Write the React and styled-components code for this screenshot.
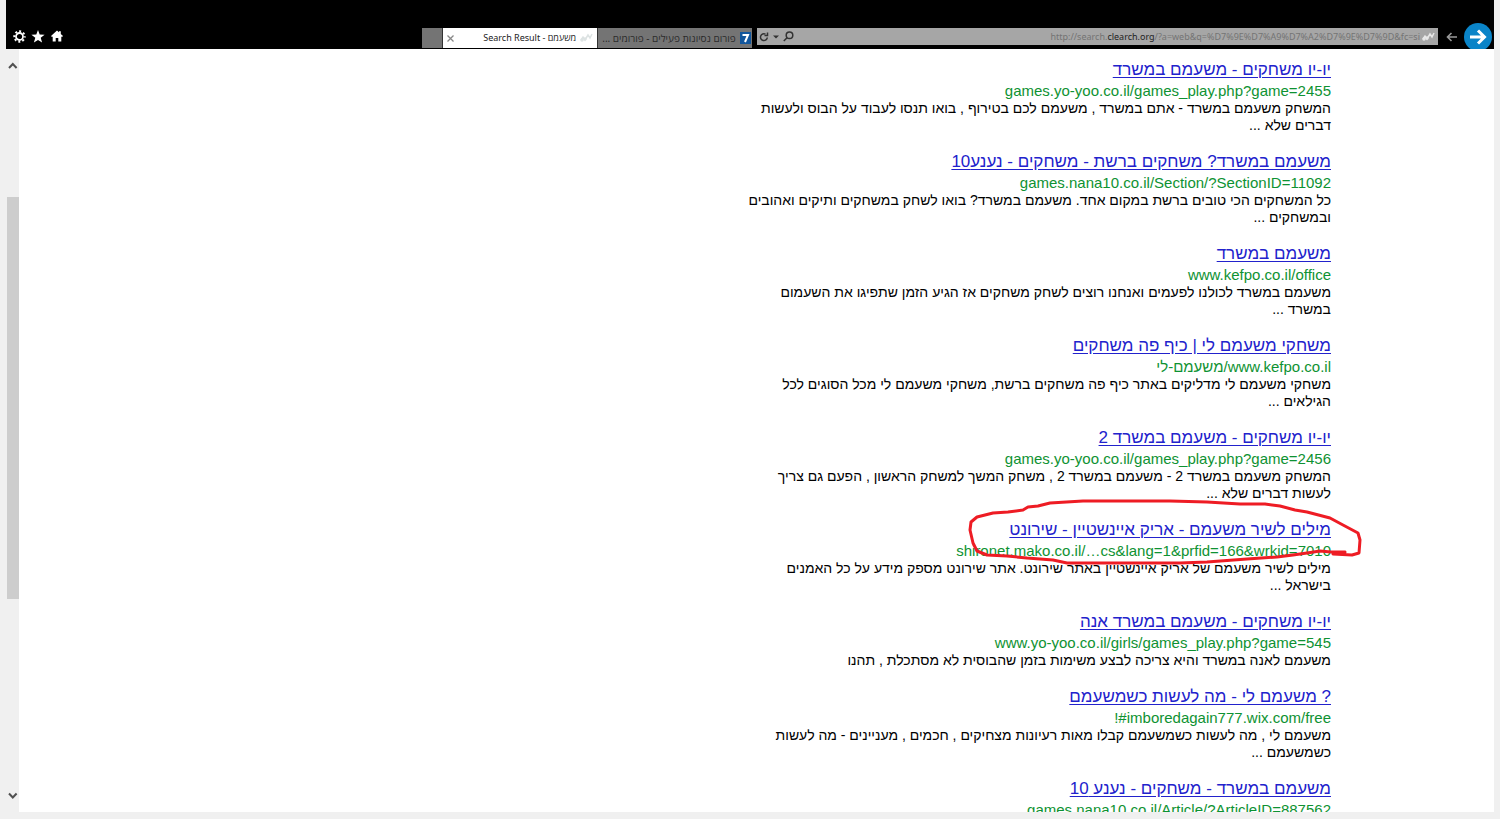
import React from 'react';
import styled, { createGlobalStyle } from 'styled-components';

const GlobalStyle = createGlobalStyle`
  * {
    box-sizing: border-box;
  }
  body {
    margin: 0;
    background: #f0f0f0;
    font-family: "Liberation Sans", Arial, sans-serif;
  }
`;

const Window = styled.div`
  display: flex;
  flex-direction: column;
  height: 100vh;
  padding: 0 6px 7px;
  overflow: hidden;
`;

const TopBar = styled.header`
  display: flex;
  align-items: flex-end;
  flex: none;
  height: 49px;
  padding: 0 2px 0 6px;
  overflow: hidden;
  background: #000;
  font-family: "Noto Sans", "Open Sans", "Liberation Sans", sans-serif;
`;

const Tools = styled.div`
  display: flex;
  flex: 1;
  gap: 5px;
  padding-bottom: 6px;
`;

const IconButton = styled.button`
  display: flex;
  align-items: center;
  justify-content: center;
  flex: none;
  width: ${props => props.$size || 14}px;
  height: ${props => props.$size || 14}px;
  padding: 0;
  border: 0;
  color: ${props => props.$color || '#fff'};
  background: none;
`;

const Tabs = styled.nav`
  display: flex;
  height: 20px;
  margin-bottom: 1px;
`;

const NewTab = styled.button`
  width: 20px;
  padding: 0;
  border: 0;
  background: #747474;
`;

const Tab = styled.div`
  display: flex;
  align-items: center;
  justify-content: space-between;
  gap: 4px;
  width: 155px;
  padding: 0 4px;
  border-left: 1px solid #333;
  background: ${props => (props.$active ? '#fff' : '#747474')};
`;

const TabLink = styled.a`
  display: flex;
  align-items: center;
  gap: 4px;
  color: ${props => (props.$active ? '#222' : '#2b2b2b')};
  font-size: ${props => (props.$active ? 9 : 10)}px;
  line-height: 20px;
  text-decoration: none;
  white-space: nowrap;
`;

const AddressBar = styled.form`
  display: flex;
  align-items: center;
  flex: none;
  width: 46%;
  height: 17px;
  margin: 0 5px 4px 5px;
  padding: 0 2px 0 0;
  color: #333;
  background: #a6a6a6;
`;

const Address = styled.label`
  position: relative;
  flex: 1;
  min-width: 0;
  height: 17px;
  overflow: hidden;
  color: #747474;
  font-size: 9px;
  line-height: 17px;
  text-align: right;
  white-space: nowrap;

  b {
    color: #222;
    font-weight: 400;
  }
`;

const AddressInput = styled.input`
  position: absolute;
  inset: 0;
  width: 100%;
  border: 0;
  background: transparent;
`;

const BackButton = styled(IconButton)`
  margin-bottom: 4px;
`;

const ForwardButton = styled(IconButton)`
  margin: 0 0 -2px 5px;
  border-radius: 50%;
  background: #0a84c8;
`;

const Body = styled.div`
  display: flex;
  flex: 1;
  min-height: 0;
`;

const ScrollBar = styled.div`
  display: flex;
  flex-direction: column;
  flex: none;
  width: 13px;
  padding: 10px 0;
`;

const Track = styled.div`
  display: flex;
  flex: 1;
  flex-direction: column;
  padding: 124px 0 0 1px;
`;

const Thumb = styled.div`
  height: 68%;
  background: #cdcdcd;
`;

const Page = styled.main`
  flex: 1;
  overflow: hidden;
  padding: 9px 163px 0 0;
  background: #fff;
`;

const Results = styled.ol`
  width: 590px;
  margin: 0;
  padding: 0;
  list-style: none;
`;

const Result = styled.li`
  position: relative;
  margin-bottom: 16px;
`;

const Title = styled.h3`
  margin: 0;
  font-size: 17px;
  font-weight: 400;
  line-height: 23px;
`;

const TitleLink = styled.a`
  color: #2222cc;
  text-decoration: underline;
  text-underline-offset: 2px;
`;

const Url = styled.cite`
  display: block;
  color: #0e9232;
  font-size: 15px;
  font-style: normal;
  line-height: 19px;
`;

const Text = styled.p`
  margin: 0;
  color: #000;
  font-size: 14px;
  line-height: 17px;
`;

const Mark = styled.svg`
  position: absolute;
  top: -21px;
  right: -32px;
  width: 396px;
  height: 70px;
  pointer-events: none;
`;

const results = [
  {
    title: 'יו-יו משחקים - משעמם במשרד',
    url: 'games.yo-yoo.co.il/games_play.php?game=2455',
    lines: [
      'המשחק משעמם במשרד - אתם במשרד , משעמם לכם בטירוף , בואו תנסו לעבוד על הבוס ולעשות',
      'דברים שלא ...',
    ],
  },
  {
    title: 'משעמם במשרד? משחקים ברשת - משחקים - נענע10',
    url: 'games.nana10.co.il/Section/?SectionID=11092',
    lines: [
      'כל המשחקים הכי טובים ברשת במקום אחד. משעמם במשרד? בואו לשחק במשחקים ותיקים ואהובים',
      'ובמשחקים ...',
    ],
  },
  {
    title: 'משעמם במשרד',
    url: 'www.kefpo.co.il/office',
    lines: [
      'משעמם במשרד לכולנו לפעמים ואנחנו רוצים לשחק משחקים אז הגיע הזמן שתפיגו את השעמום',
      'במשרד ...',
    ],
  },
  {
    title: 'משחקי משעמם לי | כיף פה משחקים',
    url: 'www.kefpo.co.il/משעמם-לי',
    lines: [
      'משחקי משעמם לי מדליקים באתר כיף פה משחקים ברשת, משחקי משעמם לי מכל הסוגים לכל',
      'הגילאים ...',
    ],
  },
  {
    title: 'יו-יו משחקים - משעמם במשרד 2',
    url: 'games.yo-yoo.co.il/games_play.php?game=2456',
    lines: [
      'המשחק משעמם במשרד 2 - משעמם במשרד 2 , משחק המשך למשחק הראשון , הפעם גם צריך',
      'לעשות דברים שלא ...',
    ],
  },
  {
    title: 'מילים לשיר משעמם - אריק איינשטיין - שירונט',
    url: 'shironet.mako.co.il/…cs&lang=1&prfid=166&wrkid=7010',
    lines: [
      'מילים לשיר משעמם של אריק איינשטיין באתר שירונט. אתר שירונט מספק מידע על כל האמנים',
      'בישראל ...',
    ],
    marked: true,
  },
  {
    title: 'יו-יו משחקים - משעמם במשרד אנה',
    url: 'www.yo-yoo.co.il/girls/games_play.php?game=545',
    lines: ['משעמם לאנה במשרד והיא צריכה לבצע משימות בזמן שהבוסית לא מסתכלת , תהנו'],
  },
  {
    title: '? משעמם לי - מה לעשות כשמשעמם',
    url: 'imboredagain777.wix.com/free#!',
    lines: [
      'משעמם לי , מה לעשות כשמשעמם קבלו מאות רעיונות מצחיקים , חכמים , מעניינים - מה לעשות',
      'כשמשעמם ...',
    ],
  },
  {
    title: 'משעמם במשרד - משחקים - נענע 10',
    url: 'games.nana10.co.il/Article/?ArticleID=887562',
    lines: [],
  },
];

const Gear = () => (
  <svg width="13" height="13" viewBox="0 0 13 13" fill="none" stroke="currentColor">
    <circle cx="6.5" cy="6.5" r="3.5" strokeWidth="1.8" />
    <circle cx="6.5" cy="6.5" r="5.2" strokeWidth="2" strokeDasharray="2 2.084" strokeDashoffset="1" />
  </svg>
);

const Star = () => (
  <svg width="14" height="13" viewBox="0 0 14 13" fill="currentColor">
    <path d="M7 0l1.700 4.600 4.900.2-3.900 3 1.400 4.800L7 9.900l-4.100 2.700 1.400-4.800-3.900-3 4.900-.2z" />
  </svg>
);

const Home = () => (
  <svg width="12" height="12" viewBox="0 0 12 12" fill="currentColor">
    <path d="M6 .5l2 1.800V1.200h1.800v2.700L12 6l-1 1-.7-.6v5.100h-3V8H4.700v3.500h-3V6.400L1 7 0 6z" />
  </svg>
);

const Close = () => (
  <svg width="7" height="7" viewBox="0 0 7 7" stroke="#888" strokeWidth="1.3">
    <path d="M.5.5l6 6M6.500.5l-6 6" />
  </svg>
);

const Spark = ({ color }) => (
  <svg width="13" height="10" viewBox="0 0 13 10" fill="none" stroke={color} strokeWidth="1.5">
    <path d="M1 7l2-3 2 3 3-5 2 3 2-4" />
    <circle cx="2" cy="7" r="1" />
    <circle cx="5" cy="6" r="1" />
  </svg>
);

const Seven = () => (
  <svg width="11" height="12" viewBox="0 0 11 12">
    <rect width="11" height="12" fill="#12569c" />
    <path d="M2.500 3H8L5 10" fill="none" stroke="#fff" strokeWidth="2" />
  </svg>
);

const Refresh = () => (
  <svg width="10" height="10" viewBox="0 0 10 10" fill="none" stroke="currentColor" strokeWidth="1.5">
    <path d="M8.300 5.500A3.400 3.400 0 1 1 6.500 2.200" />
    <path d="M5.500 3.500h3V.5" />
  </svg>
);

const Caret = () => (
  <svg width="6" height="4" viewBox="0 0 6 4" fill="currentColor">
    <path d="M0 .5h6l-3 3z" />
  </svg>
);

const Search = () => (
  <svg width="11" height="11" viewBox="0 0 11 11" fill="none" stroke="currentColor" strokeWidth="1.5">
    <circle cx="6.5" cy="4.3" r="3.3" />
    <path d="M4 6.800L.8 10" />
  </svg>
);

const Back = () => (
  <svg width="11" height="10" viewBox="0 0 11 10" fill="none" stroke="currentColor" strokeWidth="1.6">
    <path d="M11 5H1.500M5.500 1l-4 4 4 4" />
  </svg>
);

const Forward = () => (
  <svg width="18" height="16" viewBox="0 0 18 16" fill="none" stroke="currentColor" strokeWidth="3">
    <path d="M1 8h14M9 1.500L15.500 8 9 14.500" />
  </svg>
);

const Chevron = ({ up }) => (
  <svg width="13" height="14" viewBox="0 0 13 14" fill="none" stroke="#505050" strokeWidth="2">
    <path d={up ? 'M3 9l3.800-4 3.800 4' : 'M3 5.500l3.800 4 3.800-4'} />
  </svg>
);

const RedCircle = () => (
  <Mark
    viewBox="967 497 396 70"
    fill="none"
    stroke="#ee1c24"
    strokeWidth="3"
    strokeLinejoin="round"
    strokeLinecap="round"
  >
    <path d="M1331 552L1320 551 1307 553 1293 555 1277 557 1247 559 1207 562 1180 563H1067L1053 560 1027 558 1007 556 987 555 977 551 973 543 970 530 971 522 977 517 993 513 1008 512 1023 510 1028 507 1038 506 1050 503 1083 501H1170L1207 502 1240 504 1265 504 1280 506 1295 510 1307 512 1330 518 1343 525 1358 533 1360 540 1359 553 1352 555 1333 554 1345 552 1331 552" />
  </Mark>
);

const App = () => {
  return (
    <Window>
      <GlobalStyle />
      <TopBar>
        <Tools>
          <IconButton aria-label="Tools"><Gear /></IconButton>
          <IconButton aria-label="Favorites"><Star /></IconButton>
          <IconButton aria-label="Home"><Home /></IconButton>
        </Tools>
        <Tabs>
          <NewTab aria-label="New tab" />
          <Tab $active>
            <IconButton $size={7} aria-label="Close tab"><Close /></IconButton>
            <TabLink $active href="#search" dir="rtl">
              <Spark color="#dde3e3" />
              <span>משעמם - Search Result</span>
            </TabLink>
          </Tab>
          <Tab>
            <TabLink href="#forum" dir="rtl">
              <Seven />
              <span>פורום נסיונות פעילים - פורומים ...</span>
            </TabLink>
          </Tab>
        </Tabs>
        <AddressBar>
          <IconButton type="button" $color="#333" aria-label="Refresh"><Refresh /></IconButton>
          <IconButton type="button" $size={10} $color="#333" aria-label="History"><Caret /></IconButton>
          <IconButton type="button" $color="#333" aria-label="Search"><Search /></IconButton>
          <Address>
            http://search.<b>clearch.org</b>/?a=web&amp;q=%D7%9E%D7%A9%D7%A2%D7%9E%D7%9D&amp;fc=si
            <AddressInput aria-label="Address" />
          </Address>
          <IconButton as="span" $size={16}><Spark color="#e8e8e8" /></IconButton>
        </AddressBar>
        <BackButton $size={16} $color="#999" aria-label="Back"><Back /></BackButton>
        <ForwardButton $size={28} aria-label="Forward"><Forward /></ForwardButton>
      </TopBar>
      <Body>
        <ScrollBar>
          <Chevron up />
          <Track>
            <Thumb />
          </Track>
          <Chevron />
        </ScrollBar>
        <Page dir="rtl">
          <Results>
            {results.map(item => (
              <Result key={item.url}>
                <Title>
                  <TitleLink href="#result">{item.title}</TitleLink>
                </Title>
                <Url>{item.url}</Url>
                {item.lines.map(line => (
                  <Text key={line}>{line}</Text>
                ))}
                {item.marked && <RedCircle />}
              </Result>
            ))}
          </Results>
        </Page>
      </Body>
    </Window>
  );
};

export default App;
